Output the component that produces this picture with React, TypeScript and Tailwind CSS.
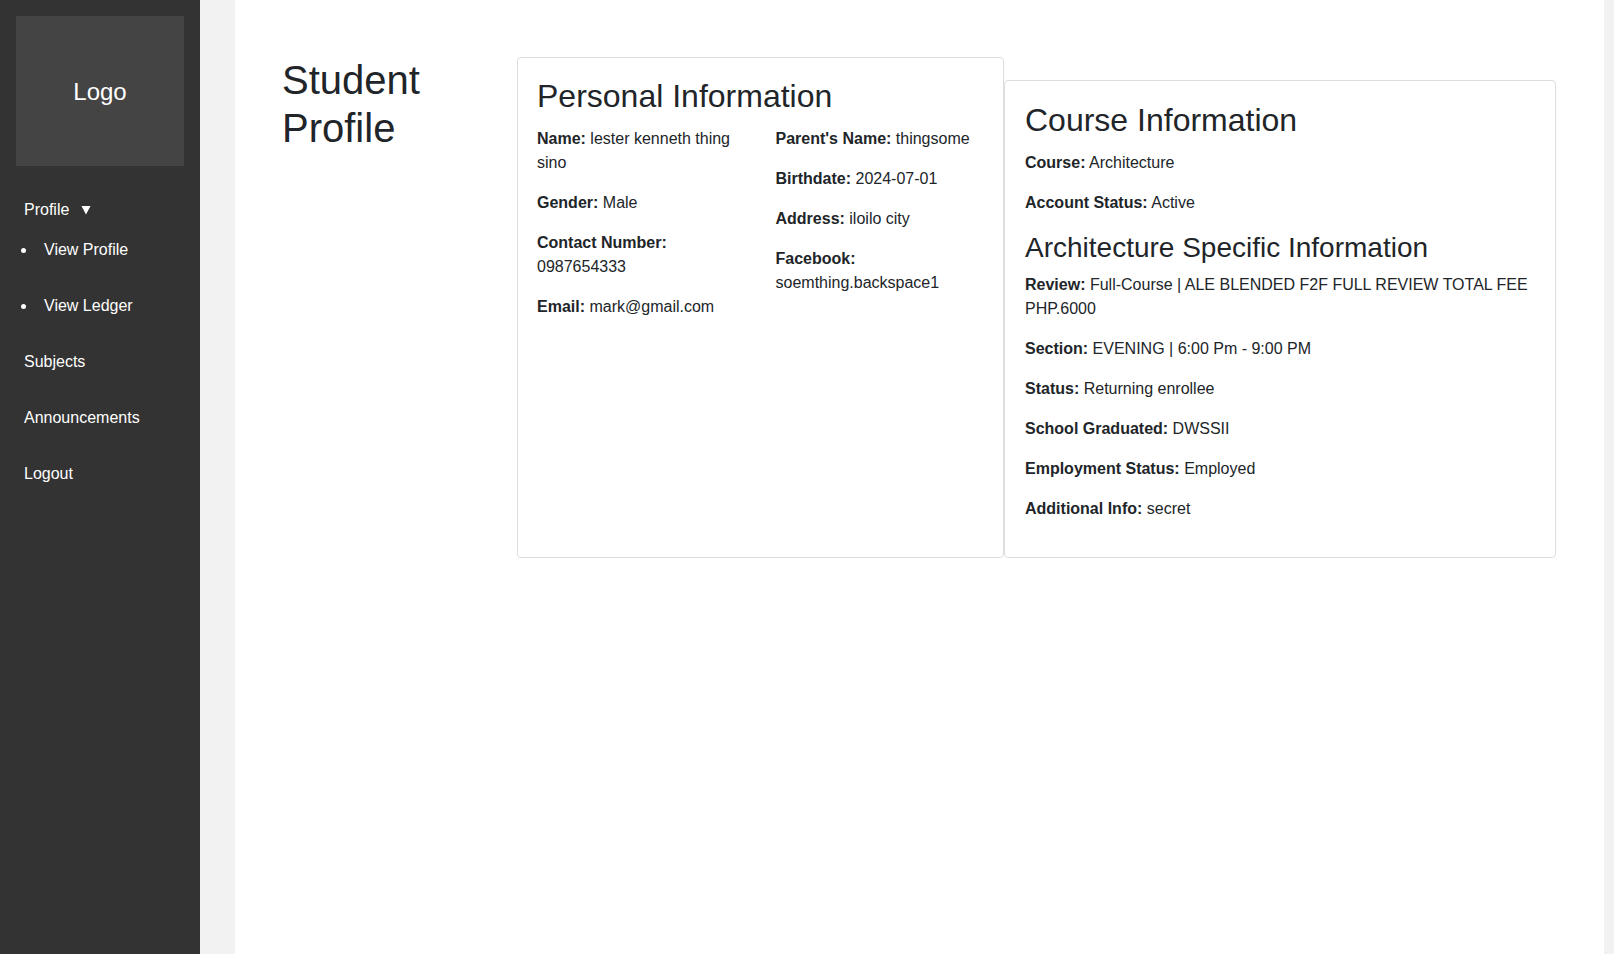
export default function App() {
  const Dot = () => <span className="ml-[21px] mr-[18px] inline-block h-[5px] w-[5px] rounded-full bg-white" />;
  const P = ({ label, value }: { label: string; value: string }) => (
    <p className="mb-4 text-[16px] leading-6">
      <span className="font-bold">{label}</span> {value}
    </p>
  );
  return (
    <div className="flex min-h-[954px] bg-[#f2f2f2] font-['Liberation_Sans',Arial,sans-serif] text-[#212529]">
      <aside className="w-[200px] shrink-0 bg-[#333333] pt-4 text-white">
        <div className="mx-4 flex h-[150px] items-center justify-center bg-[#444444] text-[24px] leading-[29px]">
          Logo
        </div>
        <nav className="mt-4 text-[16px] leading-6">
          <div className="flex items-center pl-6 pt-4">
            <span>Profile</span>
            <svg className="ml-[12px]" width="10" height="10" viewBox="0 0 10 10">
              <path d="M0.5 1 L9.5 1 L5 9.5 Z" fill="white" />
            </svg>
          </div>
          <ul>
            <li className="flex items-center py-4">
              <Dot />
              View Profile
            </li>
            <li className="flex items-center py-4">
              <Dot />
              View Ledger
            </li>
          </ul>
          <div className="py-4 pl-6">Subjects</div>
          <div className="py-4 pl-6">Announcements</div>
          <div className="py-4 pl-6">Logout</div>
        </nav>
      </aside>
      <main className="ml-[35px] mr-[10px] flex-1 bg-white">
        <div className="grid grid-cols-[236px_487px_552px] items-stretch pl-[46px] pt-14">
          <h1 className="ml-px text-[40px] font-normal leading-[1.2] text-[#212529]">
            Student Profile
          </h1>
          <section className="mt-px rounded-[4px] border border-[#dedede] p-[19px]">
            <h2 className="mb-3 text-[32px] font-normal leading-[1.2]">Personal Information</h2>
            <div className="-mx-[15px] grid grid-cols-2">
              <div className="px-[15px]">
                <P label="Name:" value="lester kenneth thing sino" />
                <P label="Gender:" value="Male" />
                <P label="Contact Number:" value="0987654333" />
                <P label="Email:" value="mark@gmail.com" />
              </div>
              <div className="px-[15px]">
                <P label="Parent's Name:" value="thingsome" />
                <P label="Birthdate:" value="2024-07-01" />
                <P label="Address:" value="iloilo city" />
                <P label="Facebook:" value="soemthing.backspace1" />
              </div>
            </div>
          </section>
          <section className="mt-6 self-start rounded-[4px] border border-[#dedede] p-5">
            <h2 className="mb-3 text-[32px] font-normal leading-[1.2]">Course Information</h2>
            <P label="Course:" value="Architecture" />
            <P label="Account Status:" value="Active" />
            <h3 className="mb-2 text-[28px] font-normal leading-[1.2]">Architecture Specific Information</h3>
            <P label="Review:" value="Full-Course | ALE BLENDED F2F FULL REVIEW TOTAL FEE PHP.6000" />
            <P label="Section:" value="EVENING | 6:00 Pm - 9:00 PM" />
            <P label="Status:" value="Returning enrollee" />
            <P label="School Graduated:" value="DWSSII" />
            <P label="Employment Status:" value="Employed" />
            <P label="Additional Info:" value="secret" />
          </section>
        </div>
      </main>
    </div>
  );
}
